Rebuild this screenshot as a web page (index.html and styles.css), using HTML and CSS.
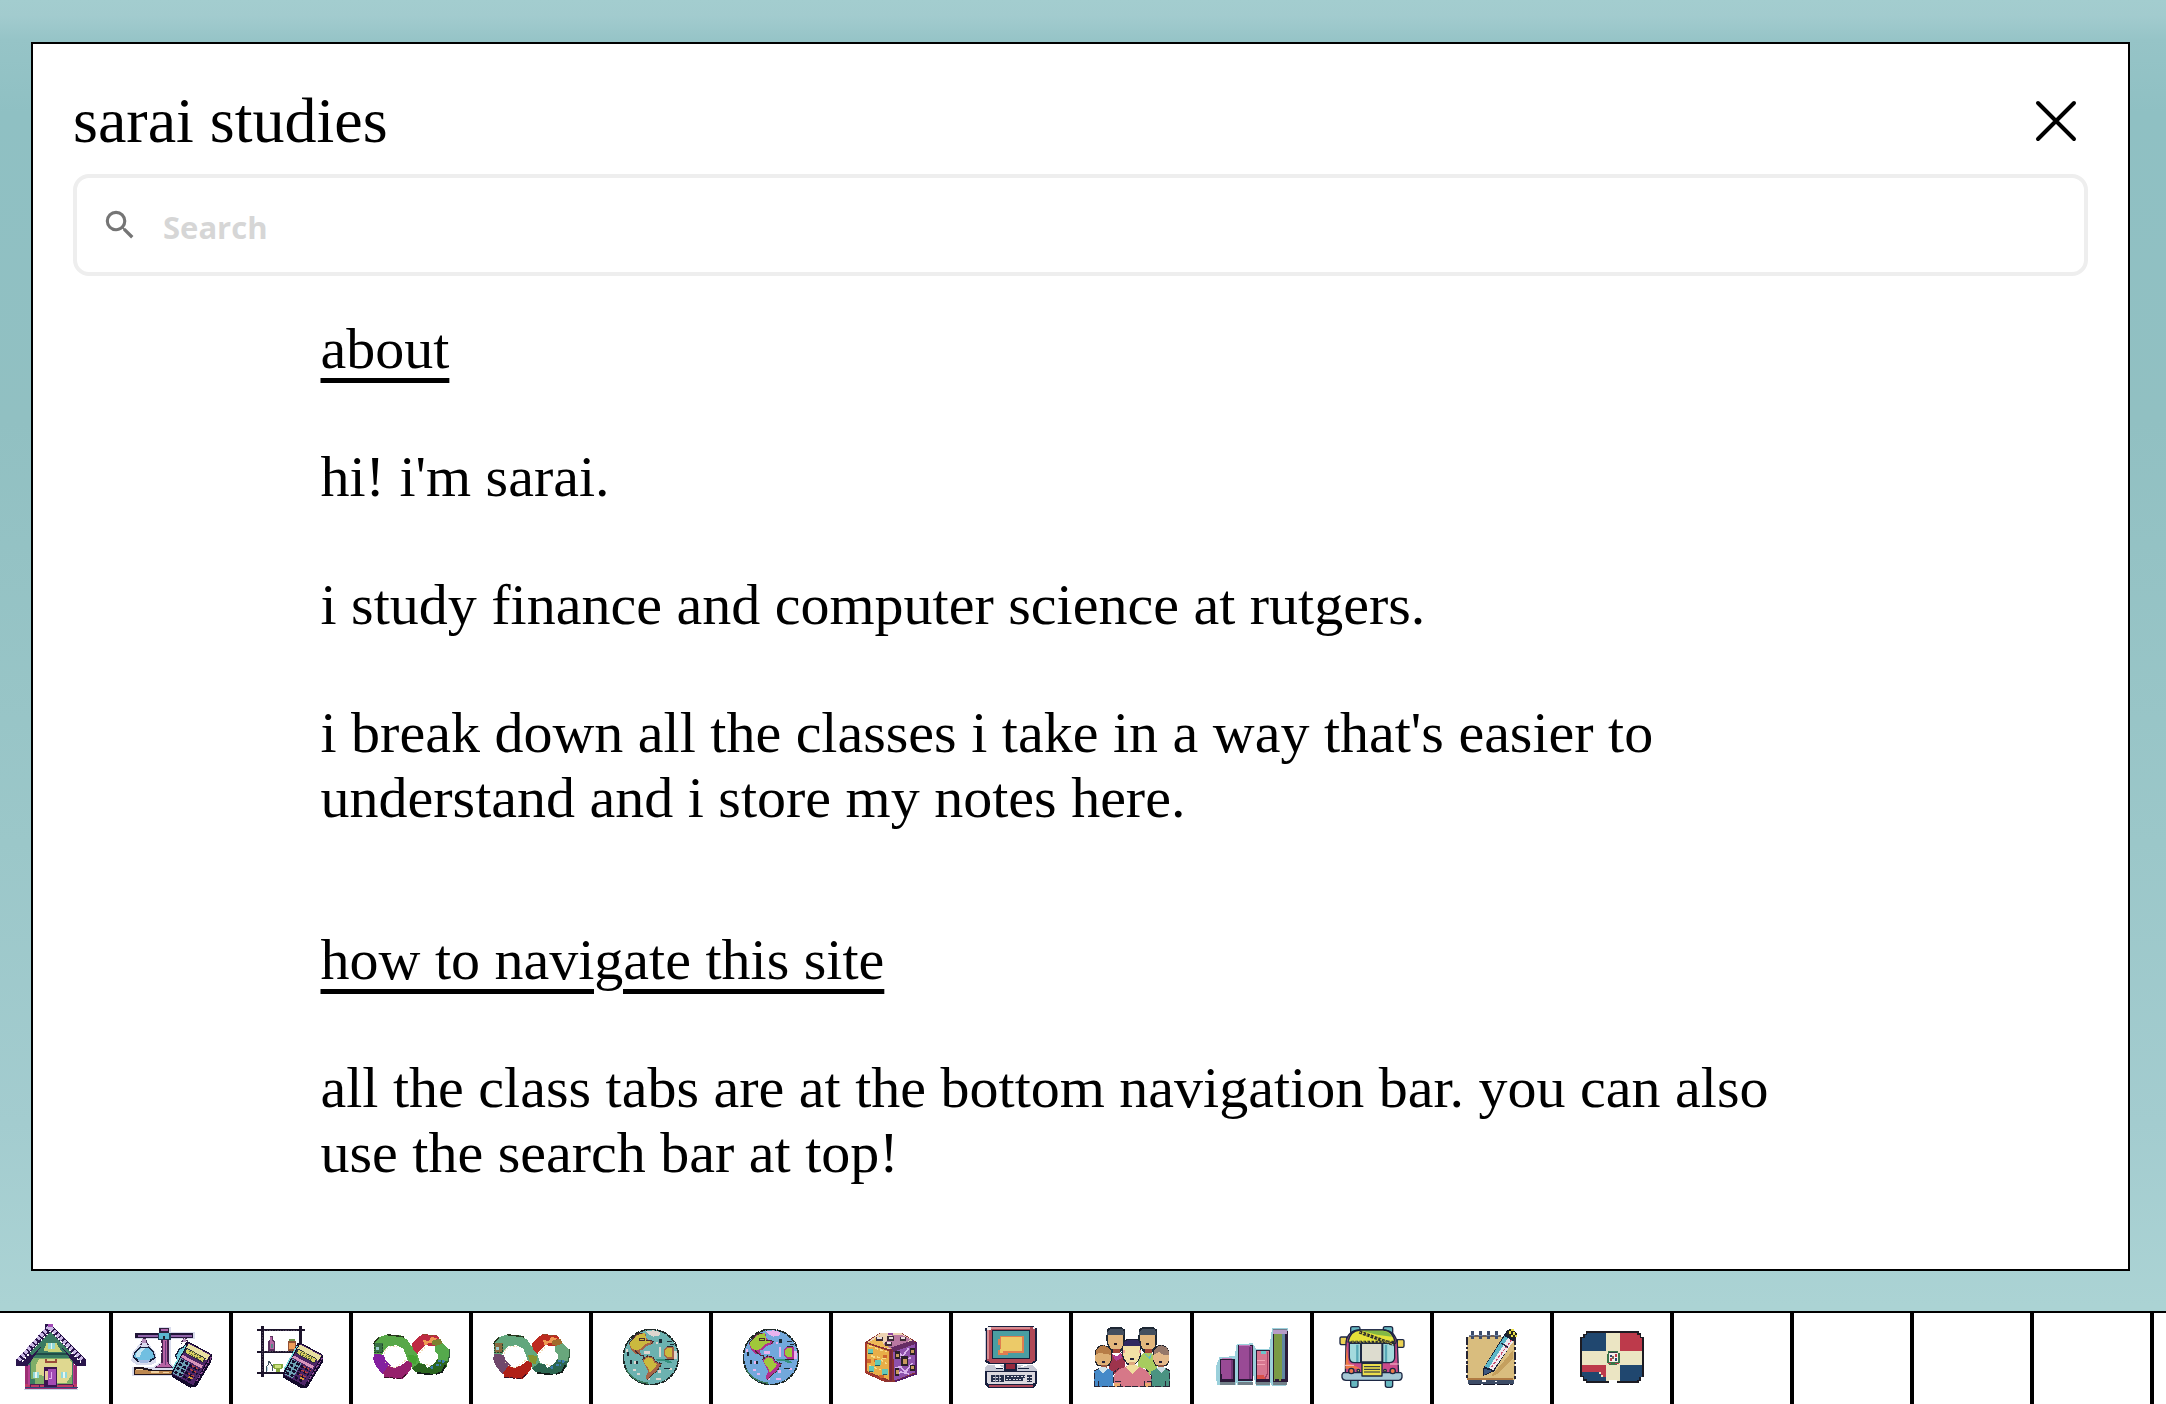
FILE: index.html
```html
<!DOCTYPE html>
<html lang="en">
<head>
<meta charset="utf-8">
<meta name="viewport" content="width=device-width, initial-scale=1">
<title>sarai studies</title>
<link rel="stylesheet" href="styles.css">
</head>
<body>
<svg class="defs" aria-hidden="true">
  <symbol id="calculator" viewBox="0 0 125 145">
    <path d="M44 8L56 8L122 44L120 66L74 142L56 144L2 112L0 100Z" fill="#130a2b"/>
    <path d="M52 10L118 44L66 136L4 104Z" fill="#4d2568"/>
    <path d="M52 12L116 46L106 62L42 28Z" fill="#e8e0a0"/>
    <path d="M45 24L104 56L95 70L37 38Z" fill="#282b3f"/>
    <path d="M48 28L100 57L94 66L42 38Z" fill="#d9cf62"/>
    <path d="M54 34L88 54M52 40L84 58M62 34L92 52" stroke="#5b6234" stroke-width="3" stroke-dasharray="5 4"/>
    <path d="M34 46L94 77L90 86L29 52Z" fill="#d894bb"/>
    <path d="M28 55L56 70L30 114L5 101Z" fill="#6fa3b5"/>
    <path d="M28 62L84 92M22 73L78 103M16 84L70 113M10 96L62 124" stroke="#150d2e" stroke-width="8" stroke-dasharray="10 5"/>
    <path d="M62 78L84 90M57 89L78 100M50 101L70 111" stroke="#b8403f" stroke-width="4" stroke-dasharray="8 4"/>
    <path d="M52 112L64 118" stroke="#d69a3a" stroke-width="5"/>
    <path d="M120 52L76 124" stroke="#8c4a97" stroke-width="4" stroke-dasharray="9 4"/>
    <path d="M44 16L4 88" stroke="#77d5d8" stroke-width="4"/>
  </symbol>

  <symbol id="infinity" viewBox="0 0 232 138">
    <path class="c-green" d="M4 30L22 8L46 1L84 4L104 18L122 44L134 60L142 86L160 96L168 118L140 116L120 104L104 76L92 44L72 34L46 36L32 54L28 66L4 66Z"/>
    <path d="M42 2L92 8L94 12M2 30L18 10" fill="none" stroke="#26351c" stroke-width="4"/>
    <path class="c-sq" d="M6 28H32V56H6Z"/><path d="M10 38h8v10h-8z" fill="#9ad0d0"/>
    <path d="M4 54H30M30 30V54M6 30V52" stroke="#21452a" stroke-width="3" stroke-dasharray="6 3"/>
    <path class="c-left" d="M3 60L32 62L40 80L54 92L50 114L30 120L10 98L2 78Z"/>
    <path class="c-bottom" d="M32 116L46 96L66 102L86 94L104 80L118 88L116 104L98 128L86 136L34 128Z"/>
    <path d="M34 130L86 134L100 122" fill="none" stroke="#3a1025" stroke-width="3" stroke-dasharray="14 5"/>
    <path class="c-red" d="M116 30L142 6L150 0L194 4L206 22L186 36L158 34L144 46L134 60L122 46Z"/>
    <path d="M150 16L166 22L178 8L194 14L184 24L168 28L156 36Z" fill="#ef9a52"/>
    <path d="M150 2L192 5" stroke="#8b4a2a" stroke-width="3" stroke-dasharray="12 6"/>
    <path class="c-olive" d="M178 20L204 14L210 28L190 36L178 32Z"/>
    <path class="c-right" d="M186 38L210 28L231 50L228 82L194 78L196 62L186 50Z"/>
    <path d="M231 46L228 84" stroke="#315c3c" stroke-width="3"/>
    <path class="c-dark" d="M118 104L136 88L156 90L164 102L184 90L194 76L226 82L222 98L204 118L160 120L130 114Z"/>
    <path d="M134 117L182 122M190 120L208 114L218 94" fill="none" stroke="#111b18" stroke-width="5"/>
    <path d="M196 80L220 84M190 92L206 94M174 98L184 104" stroke="#3b7cae" stroke-width="7" stroke-dasharray="8 4"/>
    <path class="c-mid" d="M106 62L134 66L130 92L112 84Z"/>
    <path d="M34 60L38 46L56 36L74 38M38 84L50 98L66 102L100 78M140 58L160 38M160 92L176 94" fill="none" stroke="#f2dcb6" stroke-width="3" stroke-dasharray="5 5"/>
  </symbol>

  <symbol id="globe" viewBox="0 0 176 170">
    <circle class="g-sea" cx="88" cy="85" r="83"/>
    <path class="g-cloud" d="M72 8L94 5L114 10L116 20L96 24L82 18ZM68 68h18v9h-18zM112 56h7v28h-7zM36 98h8v8h-8zM34 120h10v8h-10zM46 132h10v7h-10zM156 68h9v24h-9zM102 41h8v5h-8zM142 118h10v6h-10zM108 124h9v9h-9zM78 148h8v6h-8zM104 149h14v5h-14zM14 62h5v7h-5z"/>
    <path class="g-edge" d="M22 44L44 18L70 12L76 32L96 38L92 46L74 52L66 62L54 64L58 78L38 74L26 58Z"/>
    <path class="g-land" d="M24 44L46 19L70 13L74 34L88 40L68 48L56 62L42 64L28 58Z"/>
    <path d="M54 30h14v6h-14zM40 66l16 14h10v8M22 44L44 18L60 13M74 34L95 38L88 46" fill="none" stroke="#4a2a30" stroke-width="3"/>
    <path class="g-edge" d="M62 92L78 82L92 84L102 98L120 106L104 130L94 136L76 154L72 144L80 128L70 108Z"/>
    <path class="g-land" d="M66 94L80 86L90 88L98 102L108 106L96 120L84 132L80 118L70 106Z"/>
    <path d="M62 92L78 82L92 84L102 98L120 106L104 130L94 136L76 154" fill="none" stroke="#3f2e2c" stroke-width="3" stroke-dasharray="9 3"/>
    <path class="g-edge" d="M126 64L136 54H156V92L136 90L126 80Z"/>
    <path class="g-land" d="M130 66L138 58H152V86L138 86L130 78Z"/>
    <path d="M136 54H154M126 92H158" stroke="#2b2a2b" stroke-width="3"/>
    <path d="M100 90L128 92L144 96L150 102H136L128 98L106 97Z" fill="#35917e"/>
    <path d="M112 32h8v11h-8zM15 69h7v12h-7zM26 94h6v12h-6zM44 98h4v8h-4zM126 118h18v4h-18zM136 36h14v4h-14zM144 46h12v4h-12z" fill="#1b2b35"/>
    <circle cx="88" cy="85" r="83" fill="none" stroke="#1f2927" stroke-width="5" stroke-dasharray="15 2"/>
    <path d="M12 120A80 80 0 0 0 78 163" fill="none" stroke="#3b7b5c" stroke-width="4"/>
  </symbol>
</svg>

<main class="desktop">
  <section class="window" aria-labelledby="site-title">
    <header class="window-header">
      <h1 class="site-title" id="site-title">sarai studies</h1>
      <button class="close" type="button" aria-label="Close">
        <svg class="close-icon" viewBox="0 0 64 64" aria-hidden="true"><path d="M14 14L50 50M50 14L14 50"/></svg>
      </button>
    </header>
    <label class="search">
      <svg class="search-icon" viewBox="0 0 24 24" aria-hidden="true"><path d="M15.5 14h-.79l-.28-.27A6.471 6.471 0 0 0 16 9.5 6.5 6.5 0 1 0 9.5 16c1.61 0 3.09-.59 4.23-1.57l.27.28v.79l5 4.99L20.49 19l-4.99-5zm-6 0C7.01 14 5 11.99 5 9.500S7.010 5 9.500 5 14 7.010 14 9.500 11.990 14 9.500 14z"/></svg>
      <input class="search-input" type="search" placeholder="Search" aria-label="Search">
    </label>
    <div class="content">
      <section class="block">
        <h2 class="heading">about</h2>
        <p>hi! i'm sarai.</p>
        <p>i study finance and computer science at rutgers.</p>
        <p>i break down all the classes i take in a way that's easier to understand and i store my notes here.</p>
      </section>
      <section class="block">
        <h2 class="heading">how to navigate this site</h2>
        <p>all the class tabs are at the bottom navigation bar. you can also use the search bar at top!</p>
      </section>
    </div>
  </section>
</main>

<nav class="taskbar" aria-label="Classes">
  <a class="tab tab-home" href="#home" aria-label="Home">
    <svg class="icon" viewBox="0 189 327 273">
      <path d="M74 346H86V314H222V346H232V418H74Z" fill="#9c2f73"/>
      <path d="M74 402H232V412H74Z" fill="#bf3a64"/><path d="M74 412H234" stroke="#33437a" stroke-width="3"/><path d="M72 417H234" stroke="#c4d6e4" stroke-width="3"/>
      <path d="M84 312L152 240L220 312V404H84Z" fill="#3a7a62"/>
      <path d="M96 324H216V402H104V386H92V350Z" fill="#7fae68"/>
      <path d="M118 326H208L216 340V374L200 398H172V352H132V378L106 372L108 346Z" fill="#dfd890"/>
      <path d="M130 304L140 278H168L186 306Z" fill="#c9d279"/>
      <path d="M104 312H210" stroke="#204b48" stroke-width="4"/>
      <path d="M48 330L136 234V222H160V232L258 328V348H228L152 250L82 348H48Z" fill="#2a164c"/>
      <path d="M56 330L148 230L250 332" fill="none" stroke="#cbb8e5" stroke-width="12" stroke-dasharray="9 5"/>
      <path d="M66 334L152 243L244 338" fill="none" stroke="#fff" stroke-width="5" stroke-dasharray="5 7"/>
      <path d="M144 222h16v10h-16z" fill="#a14bb6"/>
      <path d="M92 312L152 254L212 312" fill="none" stroke="#3a7a62" stroke-width="10"/>
      <path d="M144 278h20v20h-20zM98 366h20v18h-20zM182 366h20v18h-20z" fill="#91d8da"/><path d="M154 278v20M108 366v18M192 366v18" stroke="#e8f5ee" stroke-width="4"/>
      <path d="M138 328V336H168V328" fill="none" stroke="#9a4c3b" stroke-width="5"/>
      <path d="M132 352H172V410H132Z" fill="#3b1450"/><path d="M144 358H168V406H144Z" fill="#a24bb4"/><path d="M135 362h8v28h-8z" fill="#e8ca9c"/><path d="M154 366V386H148" fill="none" stroke="#e2abef" stroke-width="4"/>
      <path d="M90 402H132M174 402H222M90 402v10M118 402v10M220 402v10" stroke="#502051" stroke-width="3"/>
      <path d="M86 346V404M220 346V404" stroke="#b73f91" stroke-width="5"/>
    </svg>
  </a>
  <a class="tab" href="#financial-accounting" aria-label="Financial accounting">
    <svg class="icon" viewBox="339 189 348 273">
      <path d="M396 310L432 264L468 310V338L450 346H412L394 334ZM476 232H512V246H584V266H512V340L524 352V378H396V350H460L482 336V268H404V250H476Z" fill="#d9dced"/>
      <path d="M406 256H480M512 256H580" stroke="#201538" stroke-width="14"/><path d="M414 257H478M514 257H576" stroke="#8e62a8" stroke-width="6"/>
      <path d="M478 234H508V248H478Z" fill="#30203f"/><path d="M484 236H504V244H484Z" fill="#b167b0"/>
      <path d="M474 248H512V270H474Z" fill="#1d3850"/><path d="M478 250H508V266H478Z" fill="#5bb7d0"/><path d="M488 258h8v10h-8z" fill="#24202f"/>
      <path d="M484 270H506V340L520 354H462L484 340Z" fill="#40214c"/><path d="M488 270H502V336L512 350H470L488 338Z" fill="#b763a4"/><path d="M484 280v30" stroke="#fff" stroke-width="5" stroke-dasharray="8 5"/><path d="M496 274v70" stroke="#6d3b7d" stroke-width="4"/>
      <path d="M432 264L420 290M434 264L446 290M552 262L544 282M556 262L568 282" stroke="#40284b" stroke-width="5" stroke-dasharray="6 3"/><path d="M427 266h12v12h-12zM548 266h10v10h-10z" fill="#b891bc"/>
      <path d="M398 322L404 304L420 290H446L460 302L468 324L450 336H414Z" fill="#18203b"/><path d="M402 320L408 306L422 293H444L458 306L463 322L448 330H416Z" fill="#71bfe1"/><path d="M410 306L424 294H436L424 306L420 322H408Z" fill="#c8e6f2"/><path d="M414 330H450L444 340H422Z" fill="#a3b8e0"/>
      <path d="M524 318L536 296L558 286V332H532Z" fill="#18203b"/><path d="M529 317L540 298L558 292V326H532Z" fill="#6ec9de"/>
      <path d="M402 352H430L462 360H524V376H402Z" fill="#21151d"/><path d="M406 359H436L450 364H522V371H406Z" fill="#bd8850"/><path d="M408 358h22M454 366h22M488 368h18" stroke="#f0d1a0" stroke-width="4"/>
      <use href="#calculator" x="514" y="269" width="125" height="145"/>
    </svg>
  </a>
  <a class="tab" href="#managerial-accounting" aria-label="Managerial accounting">
    <svg class="icon" viewBox="699 189 348 273">
      <path d="M771 240H915M771 305H890M771 369H864M787 228V380M901 228V300" stroke="#1c142b" stroke-width="7"/>
      <path d="M792 241H895M792 305H880M787 246V364" stroke="#675b72" stroke-width="2" stroke-dasharray="4 4"/>
      <path d="M810 258h8v10l7 6v28h-21v-28l6-6z" fill="#5a315e"/><path d="M811 262h6v10l4 6v18h-12v-20z" fill="#b767a5"/><path d="M812 282h8v12h-8z" fill="#558a86"/>
      <path d="M866 268H884V274H888V302H863V274H866Z" fill="#905034"/><path d="M867 278H884V296H867Z" fill="#ee9d59"/><path d="M867 268H884V274H867Z" fill="#6f9549"/>
      <path d="M806 332V342L798 352V366M806 332L816 346V364" fill="none" stroke="#425462" stroke-width="3"/><path d="M803 350v12" stroke="#b6dce5" stroke-width="4"/>
      <path d="M820 342H848V354L840 358V366H828V358L820 354Z" fill="#85a940"/><path d="M826 345h18v8h-18z" fill="#cbe17d"/>
      <use href="#calculator" x="848" y="271" width="125" height="145"/>
    </svg>
  </a>
  <a class="tab" href="#calculus-1" aria-label="Calculus 1">
    <svg class="icon infinity-bright" viewBox="39 39 348 273"><use href="#infinity" x="98" y="102" width="232" height="138"/></svg>
  </a>
  <a class="tab" href="#calculus-2" aria-label="Calculus 2">
    <svg class="icon infinity-muted" viewBox="399 39 348 273"><use href="#infinity" x="458" y="102" width="232" height="138"/></svg>
  </a>
  <a class="tab" href="#microeconomics" aria-label="Microeconomics">
    <svg class="icon globe-teal" viewBox="9 39 348 273"><use href="#globe" x="95" y="86" width="176" height="170"/></svg>
  </a>
  <a class="tab" href="#macroeconomics" aria-label="Macroeconomics">
    <svg class="icon globe-blue" viewBox="369 39 348 273"><use href="#globe" x="455" y="86" width="176" height="170"/></svg>
  </a>
  <a class="tab" href="#probability" aria-label="Probability">
    <svg class="icon" viewBox="9 39 348 273">
      <path d="M106 126L150 98H214L260 126V222L196 246H164L106 220Z" fill="#8d3230"/>
      <path d="M112 126L150 100H214L252 124L184 150Z" fill="#eed4b4"/>
      <path d="M168 124L190 104H216L240 118L224 132L184 146L160 132Z" fill="#b978a1"/>
      <path d="M114 128L150 108L160 132L184 146L152 140Z" fill="#edb957"/>
      <path d="M112 132L178 154V240L112 214Z" fill="#e8ae48"/>
      <path d="M190 154L254 128V218L192 242Z" fill="#8f52ac"/><path d="M184 142L252 120L256 132L190 156Z" fill="#652c63"/>
      <path d="M118 138L170 156M124 168L170 176M116 196L152 210M152 178L170 192M116 154L134 174" stroke="#f6dc87" stroke-width="4" stroke-dasharray="10 7"/>
      <path d="M160 164h12v10h-12zM132 178h10v8h-10zM112 178h10v10h-10zM146 226h16v8h-16z" fill="#cf662e"/>
      <path d="M196 164L214 174L236 144M194 204L212 200L226 216L248 188M208 158L224 180L244 172M196 226L212 216L238 222" fill="none" stroke="#dbb5ed" stroke-width="5"/>
      <path d="M182 146V242" stroke="#7b243e" stroke-width="6"/><path d="M108 128V220M112 218L164 242" stroke="#a7382c" stroke-width="5"/><path d="M257 126V222L196 244" fill="none" stroke="#571c69" stroke-width="5"/>
      <path d="M114 146h16v15h-16zM134 180h18v16h-18zM118 198h14v18h-14zM157 208h18v16h-18z" fill="#62c8b8"/><path d="M114 158h14v4h-14zM136 194h14v4h-14zM118 212h12v4h-12zM160 221h12v4h-12z" fill="#285a59"/>
      <path d="M194 153h15v24h-15zM213 168h20v30h-20zM194 203h14v24h-14zM240 145h14v20h-14zM240 194h14v18h-14z" fill="#2c2028"/><path d="M199 162h8v10h-8zM218 178h12v14h-12zM198 211h8v10h-8zM244 151h8v8h-8zM244 199h8v7h-8z" fill="#c99a5e"/>
      <path d="M137 111h22v12h-22zM172 109h20v14h-20zM209 110h20v12h-20zM166 126h20v13h-20z" fill="#3c2a36"/><path d="M141 111h14v5h-14zM176 111h12v5h-12zM213 111h12v5h-12zM170 127h12v5h-12z" fill="#e8dede"/>
      <path d="M174 98h16v8h-16z" fill="#8e459c"/>
    </svg>
  </a>
  <a class="tab" href="#computer-science" aria-label="Computer science">
    <svg class="icon" viewBox="369 39 348 273">
      <path d="M474 78H612V84H620V184L608 192H476L464 184V84H474Z" fill="#18203e"/>
      <path d="M478 82H608L616 90V180L604 188H480L470 180V90Z" fill="#b04957"/>
      <path d="M474 90V176M482 84H600" stroke="#d98c91" stroke-width="4"/><path d="M466 92V180" stroke="#c9cbdc" stroke-width="3"/><path d="M472 82h10v8h-10zM608 82h6v6h-6z" fill="#f2eaea"/>
      <path d="M486 90H600V176H486Z" fill="#16243e"/><path d="M490 94H596V173H490Z" fill="#4a9ea2"/>
      <path d="M510 107H582V158H534V164H504V150H510V134H504V118H510Z" fill="#df7d50"/><path d="M514 111H576V154H518V158H510V148H514Z" fill="#ecca68"/>
      <path d="M522 190H562V212H522Z" fill="#18203e"/><path d="M528 192H556V208H528Z" fill="#96293d"/>
      <path d="M474 194H522V212H464V204ZM562 212V194H606L620 208V212Z" fill="#c6c8d4"/><path d="M494 196h16l12 10h-24zM566 204l14-8h14" fill="#fff"/><path d="M498 206H520M564 206H596" stroke="#18203e" stroke-width="4"/>
      <path d="M464 212H620V252L612 264H474L464 254Z" fill="#18203e"/><path d="M470 216H614V248L608 252H476L470 248Z" fill="#dcd9df"/><path d="M478 255H608V260H478Z" fill="#ae4658"/>
      <path d="M484 226H522V246H484ZM526 226H586V234H580V244H526ZM590 226H606V246H590Z" fill="#26304b"/><path d="M488 232H518M488 240H518M532 230H584M528 238H576M590 233H606M590 240H606" stroke="#dedce5" stroke-width="3" stroke-dasharray="6 4"/><path d="M496 226v20M508 226v20" stroke="#b9bbce" stroke-width="2"/>
    </svg>
  </a>
  <a class="tab tab-wide" href="#management" aria-label="Management">
    <svg class="icon" viewBox="9 39 351 273">
      <g id="back-person">
        <path d="M112 88L120 82H154L166 90V126L160 148L150 158H126L114 142L108 116Z" fill="#1d2734"/><path d="M112 96L122 86H156L162 96V106H112Z" fill="#444f5e"/><path d="M114 104H160V136L152 148H124L114 130Z" fill="#e3b77d"/><path d="M130 146H150V160H130Z" fill="#a14638"/><path d="M133 130h8v5h-8z" fill="#241a24"/>
      </g>
      <use href="#back-person" x="96"/>
      <path d="M114 162H128L140 170L152 160L166 174V204L142 214L130 226H118Z" fill="#9e344c"/><path d="M124 160L138 170L152 160L156 174L138 184Z" fill="#b23e91"/>
      <path d="M204 178L220 160H246L260 190V226H238L226 206L204 200Z" fill="#a7cc5f"/><path d="M222 160L236 170L246 162L240 180Z" fill="#5fb9cb"/>
      <path d="M160 126L172 116H200L214 126V164L206 184L194 196H174L160 180L154 158Z" fill="#1e2038"/><path d="M162 126L174 120H202L210 130V140H162Z" fill="#2f2860"/><path d="M160 138H210V166L202 184L194 190H174L164 178L158 160Z" fill="#f3e0a6"/><path d="M176 186H196V202H176Z" fill="#e0a97f"/><path d="M180 174h12v6h-12z" fill="#242037"/><path d="M158 150h6v8h-6zM208 150h6v8h-6z" fill="#eba194"/>
      <path d="M76 150L86 138L98 134L116 140L126 152V180L118 198H82L74 184Z" fill="#21232c"/><path d="M78 152L88 140L100 136L114 142L122 152V164H78Z" fill="#b77d47"/><path d="M76 164L90 158L104 162L122 164V182L114 196H86L76 182Z" fill="#ddb075"/><path d="M92 196H110V208H92Z" fill="#9a5b43"/><path d="M96 184h8v6h-8z" fill="#242037"/>
      <path d="M250 150L260 138L274 134L290 140L298 154V184L290 198H256L248 180Z" fill="#21232c"/><path d="M252 152L262 140L274 136L290 142L296 154V164H252Z" fill="#96786a"/><path d="M250 164L266 156L280 164H296V182L288 196H260L250 180Z" fill="#e4b98a"/><path d="M264 196H282V208H264Z" fill="#9a5b43"/><path d="M268 184h8v6h-8z" fill="#242037"/>
      <path d="M72 212L90 204L100 216L112 204L128 214V260H72Z" fill="#4589c8"/><path d="M84 206L100 220L114 206L108 202H92Z" fill="#d1e4ed"/>
      <path d="M244 214L262 204L274 216L284 204L300 212V260H244Z" fill="#4a9382"/><path d="M260 206L274 220L286 206L282 202H264Z" fill="#c8dce4"/>
      <path d="M132 260V226L144 210L172 198L186 214L202 198L230 210L242 230V260Z" fill="#d67888"/><path d="M168 202L186 222L208 202L200 196H174Z" fill="#f0dd9c"/><path d="M132 250h18v10h-18zM224 250h18v10h-18z" fill="#e9aa6d"/>
      <path d="M73 260V212L86 206M129 248V218L146 206M134 244H150V260M224 260V244H242M244 260V226L228 208M299 260V212L288 206M84 242V260M286 242V260M72 260H300" fill="none" stroke="#292737" stroke-width="3" stroke-dasharray="18 5"/>
    </svg>
  </a>
  <a class="tab" href="#statistics" aria-label="Statistics">
    <svg class="icon" viewBox="372 39 348 273">
      <path d="M438 200L448 172L494 168L500 132L548 130L560 148L598 146L606 84H654V240L646 258H606L600 246V258H558L546 210V256H504L498 246V256H440Z" fill="#9bd0db"/>
      <path d="M450 176H496V246H450ZM504 134H550V244H504ZM558 150H600V246H558ZM610 92H654V246H610Z" fill="#2a1a37"/>
      <path d="M452 180H490V236H456V222H452ZM506 138H546V236H506Z" fill="#994a95"/><path d="M486 180v56M540 140v96" stroke="#713575" stroke-width="6"/><path d="M456 176h30M508 137h32" stroke="#c27dbc" stroke-width="4"/>
      <path d="M560 154H596V236H560Z" fill="#d77690"/><path d="M592 156V222L584 236" fill="none" stroke="#a94065" stroke-width="5"/><path d="M562 180h22M562 194h22" stroke="#f0a4b5" stroke-width="3"/><path d="M562 224h18l6 12h-24z" fill="#db5048"/><path d="M574 154h14v8h-14z" fill="#6ac4ca"/>
      <path d="M612 100H636V242H612Z" fill="#7b9a46"/><path d="M640 102V240" stroke="#6086a2" stroke-width="8"/><path d="M610 90H650V102H610Z" fill="#b79cc8"/><path d="M608 87H652" stroke="#717c8b" stroke-width="3"/>
      <path d="M450 250H496M504 250H548M558 250H600M610 250H652" stroke="#717f88" stroke-width="8"/><path d="M454 240H494M506 240H548M562 241H598M614 241H650" stroke="#2c183a" stroke-width="6" stroke-dasharray="14 5"/>
    </svg>
  </a>
  <a class="tab" href="#transportation" aria-label="Transportation">
    <svg class="icon icon-smooth" viewBox="42 39 348 273">
      <g stroke="#1c2743" stroke-width="4" stroke-linejoin="round">
        <path d="M152 100V84Q152 80 157 80H176Q180 80 180 86V98ZM250 98V86Q250 80 255 80H272Q278 80 278 86V102ZM152 240H174V256Q174 262 168 262H157Q152 262 152 256ZM256 240H278V256Q278 262 272 262H262Q256 262 256 256Z" fill="#66b7c0"/>
        <path d="M120 114Q120 111 124 111H140V134H126Q120 134 120 129ZM292 119H308Q312 119 312 123V138Q312 142 308 142H292Z" fill="#ecd354"/>
        <path d="M138 128Q142 92 178 90H252Q286 92 292 132L296 224H136Z" fill="#cb4b8b"/>
        <path d="M140 134L146 190L184 206H136Z" fill="#ee7944" stroke="none"/>
        <path d="M144 126Q150 92 180 90H250Q280 92 286 130Z" fill="#e5e139"/>
        <path d="M184 92H248Q268 94 276 110L230 104Z" fill="#83b845" stroke="none"/>
        <path d="M148 130H284V174Q282 188 268 188H164Q148 188 148 172Z" fill="#a3dadd"/>
        <path d="M184 130H246V186H184Z" fill="#dddccf"/>
        <path d="M172 134V186M258 134V186" fill="none" stroke="#58a8b6" stroke-width="7"/>
        <path d="M182 132V188M248 132V188" fill="none"/>
        <path d="M154 126H284" fill="none" stroke="#2f3030" stroke-width="8" stroke-dasharray="8 4"/><path d="M178 96L282 134" fill="none" stroke="#2b2c2b" stroke-width="10" stroke-dasharray="9 3"/><path d="M178 96L282 134M156 126H270" fill="none" stroke="#bdb545" stroke-width="3" stroke-dasharray="5 6"/>
        <path d="M130 218H302Q306 219 306 224V232Q304 241 296 241H138Q128 241 126 232V224Z" fill="#a5c8d5"/>
        <path d="M186 190H246V228H186Z" fill="#ebdd4c"/><path d="M192 200H240M192 208H240M192 216H240" fill="none" stroke-width="3"/>
        <circle cx="154" cy="213" r="8" fill="#ef7a4a"/><circle cx="278" cy="213" r="8" fill="#ef7a4a"/><circle cx="175" cy="212" r="4" fill="#e2d34a"/><circle cx="255" cy="212" r="4" fill="#e2d34a"/>
      </g>
      <path d="M132 196h30M270 192h28" stroke="#f7c6cf" stroke-width="3"/>
    </svg>
  </a>
  <a class="tab" href="#notes" aria-label="Notes">
    <svg class="icon" viewBox="402 39 348 273">
      <path d="M502 110H644V240H502Z" fill="#d9bd7e"/><path d="M502 234H640V240H502Z" fill="#b07b43"/><path d="M572 230L640 150V176L592 222Z" fill="#c5a05e"/>
      <path d="M501 110V238M645 112V236" stroke="#252535" stroke-width="4" stroke-dasharray="24 6 8 5"/>
      <path d="M504 246H642" stroke="#3d4c66" stroke-width="10"/><path d="M508 253H640" stroke="#18192c" stroke-width="4" stroke-dasharray="36 5"/><path d="M546 242h12M584 244h6" stroke="#fff" stroke-width="5"/>
      <path d="M506 108H604" stroke="#715f54" stroke-width="4"/><path d="M517 94V118M541 94V118M565 94V118M589 94V118" stroke="#3c4c6b" stroke-width="10"/><path d="M508 106H526M533 106H550M557 106H574M581 106H598" stroke="#6d83a4" stroke-width="5"/>
      <path d="M550 204L620 92L630 86L646 96L648 110L582 214L550 228Z" fill="#172036"/>
      <path d="M554 200L614 108L624 114L568 206Z" fill="#5cb6c6"/><path d="M566 204L624 114L640 124L580 210Z" fill="#f1e9ef"/><path d="M574 202L634 120" stroke="#c84c6c" stroke-width="4" stroke-dasharray="8 4"/><path d="M552 206L576 212L552 226Z" fill="#3b5780"/>
      <path d="M604 130L624 142" stroke="#232b43" stroke-width="4"/><path d="M622 92L636 88L652 100L650 112L638 116L622 104Z" fill="#252621"/><path d="M626 94h8v8h-8zM638 96h8v8h-8zM632 106h8v6h-8zM646 104h6v6h-6zM634 88h8v4h-8z" fill="#e9df4c"/>
    </svg>
  </a>
  <a class="tab" href="#dominican-studies" aria-label="Dominican studies">
    <svg class="icon" viewBox="72 39 348 273">
      <path d="M168 94H326V100H334V110H341V232H334V242H326V248H260V242H236V248H168V242H158V232H151V112H160V102H168Z" fill="#1c1b22"/>
      <path d="M172 99H322V104H330V114H336V230H328V240H322V243H172V238H162V228H156V114H164V106H172Z" fill="#ebe5c3"/>
      <path d="M172 99H229V154H156V114H164V106H172ZM270 195H336V230H328V240H322V243H270Z" fill="#20476f"/>
      <path d="M270 99H322V104H330V114H336V154H270ZM156 195H229V232H220V224H214V216H156Z" fill="#bd3a4b"/>
      <path d="M156 216H208V222H214V230H229V243H172V238H162V228H156Z" fill="#20476f"/>
      <path d="M236 240H260V250H236Z" fill="#fff"/>
      <path d="M234 154H264V160H270V188H262V194H236V188H230V162H234Z" fill="#387448"/><path d="M236 158H264V186H236Z" fill="#f4eee8"/><path d="M240 164h6v6h-6zM254 174h6v8h-6z" fill="#274572"/><path d="M254 162h6v8h-6zM240 174h6v8h-6zM234 188h10v5h-10zM256 188h10v5h-10z" fill="#bd3a4b"/><path d="M236 156H262" stroke="#333a45" stroke-width="3"/><path d="M247 168h6v8h-6z" fill="#7c6553"/>
    </svg>
  </a>
  <span class="tab"></span>
  <span class="tab"></span>
  <span class="tab"></span>
  <span class="tab"></span>
  <span class="tab"></span>
</nav>
</body>
</html>
```
FILE: styles.css
```css
* { box-sizing: border-box; }

body {
  margin: 0;
  min-height: 100vh;
  display: flex;
  flex-direction: column;
  background: linear-gradient(180deg, #a3cdcf 0, #a2cbce 16px, #96c4c7 40px, #8fc0c3 8%, #91c0c2 30%, #9bc7c9 60%, #a3cccf 80%, #abd3d4 93%);
  color: #000;
  font-family: "Liberation Serif", "Times New Roman", serif;
  font-size: 58px;
  line-height: 65px;
}

.defs {
  position: absolute;
  width: 0;
  height: 0;
}

.desktop {
  flex: 1;
  display: flex;
  padding: 42px 36px 40px 31px;
}

.window {
  flex: 1;
  min-width: 0;
  padding: 40px;
  background: #fff;
  border: 2px solid #000;
}

.window-header {
  display: flex;
  align-items: center;
  justify-content: space-between;
  margin-bottom: 16px;
}

.site-title {
  margin: 0;
  font-size: 64px;
  font-weight: 400;
  line-height: 74px;
}

.close {
  width: 64px;
  height: 64px;
  padding: 0;
  border: 0;
  background: none;
  cursor: pointer;
}

.close-icon {
  display: block;
  fill: none;
  stroke: #000;
  stroke-width: 4;
  stroke-linecap: round;
}

.search {
  display: flex;
  align-items: center;
  gap: 24px;
  height: 102px;
  padding: 0 24px;
  border: 4px solid #eee;
  border-radius: 16px;
}

.search-icon {
  flex: none;
  width: 38px;
  height: 38px;
  fill: #757575;
}

.search-input {
  flex: 1;
  min-width: 0;
  padding: 4px 0 0;
  border: 0;
  outline: 0;
  background: none;
  font: 700 31px/48px "Open Sans", "Noto Sans", sans-serif;
}

.search-input::placeholder {
  color: #d6d6d6;
  opacity: 1;
}

.content {
  display: grid;
  gap: 97px;
  max-width: 1520px;
  margin: 40px auto 0;
}

.block {
  display: grid;
  gap: 63px;
}

.block p,
.heading {
  margin: 0;
}

.heading {
  font-size: inherit;
  font-weight: 400;
  text-decoration: underline 5px;
  text-underline-offset: 10px;
}

.taskbar {
  display: flex;
  overflow: hidden;
  background: #fff;
  border-top: 2px solid #000;
}

.tab {
  flex: none;
  width: 120px;
  height: 91px;
  border-right: 4px solid #000;
}

.tab-home {
  width: 113px;
}

.tab-wide {
  width: 121px;
}

.icon {
  display: block;
  width: 100%;
  height: 100%;
  fill: none;
  shape-rendering: crispEdges;
}

.icon-smooth { shape-rendering: auto; }

.c-green { fill: var(--green); }
.c-sq { fill: var(--square); }
.c-left { fill: var(--left); }
.c-bottom { fill: var(--bottom); }
.c-red { fill: var(--red); }
.c-olive { fill: var(--olive); }
.c-right { fill: var(--right); }
.c-dark { fill: var(--dark); }
.c-mid { fill: var(--mid); }

.infinity-bright {
  --green: #58a848;
  --square: #387044;
  --left: #8420a0;
  --bottom: #96206c;
  --red: #be2a42;
  --olive: #7d8030;
  --right: #55aa4c;
  --dark: #2b651f;
  --mid: #47a332;
}

.infinity-muted {
  --green: #62a77d;
  --square: #88683e;
  --left: #70486c;
  --bottom: #b02018;
  --red: #bd2b20;
  --olive: #a16b2c;
  --right: #68a77c;
  --dark: #2c6650;
  --mid: #87952f;
}

.g-sea { fill: var(--sea); }
.g-cloud { fill: var(--cloud); }
.g-edge { fill: var(--edge); }
.g-land { fill: var(--land); }

.globe-teal {
  --sea: #6cb2b0;
  --cloud: #ded6cf;
  --edge: #a66447;
  --land: #cbb93e;
}

.globe-blue {
  --sea: #72a8dc;
  --cloud: #e9b3ef;
  --edge: #b13091;
  --land: #a0c83a;
}
```
